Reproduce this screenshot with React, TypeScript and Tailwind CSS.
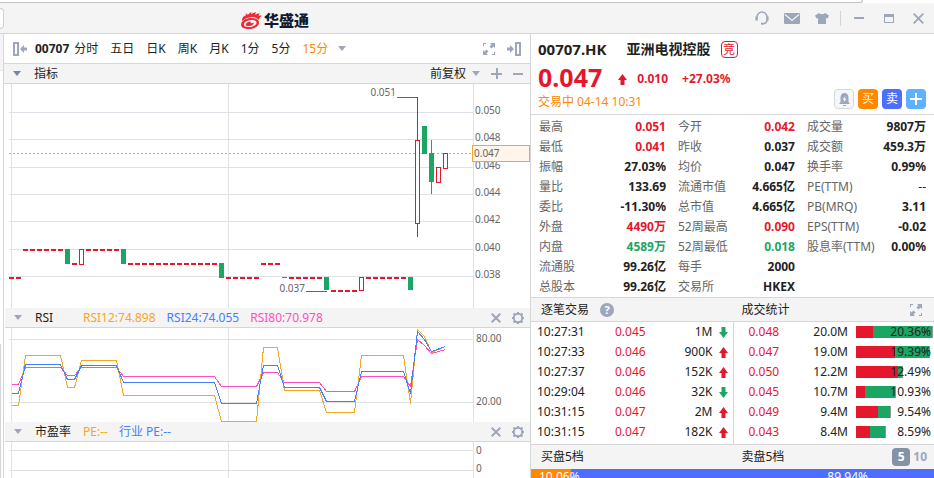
import type { ReactNode } from 'react';

type Tone = 'up' | 'down' | 'flat';

const toneClass: Record<Tone, string> = {
  up: 'font-bold text-[#e6172d]',
  down: 'font-bold text-[#1ba664]',
  flat: 'font-bold text-[#222222]',
};

const periods = ['分时', '五日', '日K', '周K', '月K', '1分', '5分', '15分'];

const quoteColumns: { label: string; value: string; tone?: Tone }[][] = [
  [
    { label: '最高', value: '0.051', tone: 'up' },
    { label: '最低', value: '0.041', tone: 'up' },
    { label: '振幅', value: '27.03%' },
    { label: '量比', value: '133.69' },
    { label: '委比', value: '-11.30%' },
    { label: '外盘', value: '4490万', tone: 'up' },
    { label: '内盘', value: '4589万', tone: 'down' },
    { label: '流通股', value: '99.26亿' },
    { label: '总股本', value: '99.26亿' },
  ],
  [
    { label: '今开', value: '0.042', tone: 'up' },
    { label: '昨收', value: '0.037' },
    { label: '均价', value: '0.047' },
    { label: '流通市值', value: '4.665亿' },
    { label: '总市值', value: '4.665亿' },
    { label: '52周最高', value: '0.090', tone: 'up' },
    { label: '52周最低', value: '0.018', tone: 'down' },
    { label: '每手', value: '2000' },
    { label: '交易所', value: 'HKEX' },
  ],
  [
    { label: '成交量', value: '9807万' },
    { label: '成交额', value: '459.3万' },
    { label: '换手率', value: '0.99%' },
    { label: 'PE(TTM)', value: '--' },
    { label: 'PB(MRQ)', value: '3.11' },
    { label: 'EPS(TTM)', value: '-0.02' },
    { label: '股息率(TTM)', value: '0.00%' },
  ],
];

const trades = [
  { time: '10:27:31', price: '0.045', volume: '1M', up: false },
  { time: '10:27:33', price: '0.046', volume: '900K', up: true },
  { time: '10:27:37', price: '0.046', volume: '152K', up: true },
  { time: '10:29:04', price: '0.046', volume: '32K', up: false },
  { time: '10:31:15', price: '0.047', volume: '2M', up: true },
  { time: '10:31:15', price: '0.047', volume: '182K', up: true },
];

const levels = [
  { price: '0.048', volume: '20.0M', buy: 17, sell: 60, share: '20.36%' },
  { price: '0.047', volume: '19.0M', buy: 39, sell: 35, share: '19.39%' },
  { price: '0.050', volume: '12.2M', buy: 42, sell: 5, share: '12.49%' },
  { price: '0.045', volume: '10.7M', buy: 9, sell: 31, share: '10.93%' },
  { price: '0.049', volume: '9.4M', buy: 22, sell: 13, share: '9.54%' },
  { price: '0.043', volume: '8.4M', buy: 14, sell: 16, share: '8.59%' },
];

// unchanged bars: [first slot, last slot, y]
const flatRuns = [
  [0, 1, 193], [2, 7, 165], [9, 9, 179], [11, 15, 165], [17, 29, 179], [31, 35, 193],
  [36, 38, 179], [40, 44, 193], [46, 49, 206], [51, 56, 193],
];

// slot, top and bottom of the body, then the wick
const candles: { slot: number; top: number; bottom: number; up?: boolean; high?: number; low?: number }[] = [
  { slot: 8, top: 165, bottom: 180 },
  { slot: 10, top: 165, bottom: 181, up: true },
  { slot: 16, top: 165, bottom: 180 },
  { slot: 30, top: 179, bottom: 194 },
  { slot: 39, top: 193, bottom: 194 },
  { slot: 45, top: 193, bottom: 206 },
  { slot: 50, top: 193, bottom: 207, up: true },
  { slot: 57, top: 193, bottom: 206 },
  { slot: 58, top: 56, bottom: 140, up: true, high: 13, low: 153 },
  { slot: 59, top: 42, bottom: 70 },
  { slot: 60, top: 69, bottom: 98, high: 56, low: 110 },
  { slot: 61, top: 83, bottom: 99, up: true },
  { slot: 62, top: 69, bottom: 85, up: true },
];

const priceTicks = [
  ['0.050', 28], ['0.048', 55], ['0.046', 83], ['0.044', 110], ['0.042', 137], ['0.040', 165], ['0.038', 192],
] as const;

const rsiX = [7, 14, 21, 56, 63, 70, 77, 112, 119, 210, 217, 252, 259, 273, 280, 315, 322, 350, 357, 399, 406, 413, 420, 427, 441];
const rsiLines = [
  { color: '#ff4fc0', y: [56, 56, 39, 39, 47, 47, 39, 39, 48, 48, 58, 58, 44, 44, 54, 54, 63, 63, 48, 48, 58, 11, 17, 25, 21] },
  { color: '#f5a623', y: [77, 77, 27, 27, 59, 59, 32, 32, 67, 67, 93, 93, 19, 19, 62, 62, 84, 84, 27, 27, 75, 1, 8, 24, 18] },
  { color: '#4280ff', y: [65, 65, 36, 36, 51, 51, 37, 37, 54, 54, 75, 75, 37, 37, 59, 59, 73, 73, 43, 43, 65, 3, 11, 23, 18] },
];

function slotX(slot: number) {
  return 5 + slot * 7;
}

function Caret() {
  return (
    <svg className="h-[5px] w-2 shrink-0" viewBox="0 0 8 5" fill="currentColor">
      <path d="M0 0h8L4 5z" />
    </svg>
  );
}

function Arrow({ up }: { up: boolean }) {
  return (
    <svg className={up ? 'h-[11px] w-[9px] text-[#e6172d]' : 'h-[11px] w-[9px] text-[#1ba664]'} viewBox="0 0 9 11" fill="currentColor">
      {up ? <path d="M4.5 0 9 6H6.500V11h-4V6H0z" /> : <path d="M4.5 11 0 5h2.500V0h4v5H9z" />}
    </svg>
  );
}

function ExpandIcon() {
  return (
    <svg className="h-3 w-3" viewBox="0 0 12 12" fill="currentColor">
      <path d="M0 0h3v1H1v2H0zM12 12H9v-1h2V9h1zM7 0h5v5l-1.500-1.500L8.500 5.500l-2-2 2-2zM5 12H0V7l1.500 1.500L3.500 6.500l2 2-2 2z" />
    </svg>
  );
}

function DockIcon({ flip }: { flip?: boolean }) {
  return (
    <svg className="h-[14px] w-[14px]" viewBox="0 0 14 14" fill="currentColor">
      {flip ? (
        <path fillRule="evenodd" d="M8 0h6v14H8zM10 2v10h2V2zM3 3l4 4-4 4V8.500H0v-3h3z" />
      ) : (
        <path fillRule="evenodd" d="M0 0h6v14H0zM2 2v10h2V2zM11 3 7 7l4 4V8.500h3v-3h-3z" />
      )}
    </svg>
  );
}

function CloseIcon() {
  return (
    <svg className="h-[10px] w-[10px]" viewBox="0 0 10 10" fill="none" stroke="currentColor" strokeWidth="2">
      <path d="m.7.7 8.600 8.600M9.300.7.7 9.300" />
    </svg>
  );
}

function GearIcon() {
  return (
    <svg className="h-3 w-3" viewBox="0 0 12 12" fill="none" stroke="currentColor">
      <circle cx="6" cy="6" r="4.200" strokeWidth="1.900" />
      <path
        strokeWidth="2"
        d="M6 0v1.800M6 10.200V12M0 6h1.800M10.200 6H12M1.500 1.500 3 3M9 9l1.500 1.500M10.500 1.500 9 3M3 9l-1.500 1.500"
      />
    </svg>
  );
}

function Logo() {
  return (
    <div className="flex items-center gap-0.5 pt-1">
      <svg className="h-[17px] w-[21px]" viewBox="0 0 21 17">
        <g fill="#ee2a35">
          <path d="M1 9C.5 6 2.500 4 5 3.200L4.600 1.200 7 2.800C8 1.600 9 .6 10.500 0c-.4 1-.3 1.600 0 2.200C12 1 13.500.4 15 .3c-.6 1-.7 1.700-.5 2.400 1.500-1 3-1.400 4.500-1.200-1 .8-1.300 1.600-1.200 2.500 1-.5 2-.6 3-.3-2 1.200-2.300 2.800-3.300 4.300C16 5.600 13 4.800 9.500 5.200 6 5.600 3 7 1 9z" />
          <path
            fillRule="evenodd"
            d="M0 12.500C.5 8.500 5 6 10.500 6c5 0 8 2 7.500 5-.6 3.500-4.500 6-10 6C3 17 0 15.500 0 12.500zM2.800 12.600c0 1.800 2 2.600 5 2.500 4-.1 7.400-2 7.700-4.200.2-1.900-2-2.900-5-2.800C6.500 8.200 3 10 2.800 12.600z"
          />
          <path d="M4.800 12.500c.3-1.700 2.800-3 5.700-3-1 .6-1.200 1.200-.8 1.600.8.300 1.800-.6 3.300-.4-.4 2-3 3.400-5.500 3.400-1.700 0-2.900-.6-2.700-1.600z" />
        </g>
      </svg>
      <span className="text-[15px] leading-5 font-black text-[#0f1b33]">华盛通</span>
    </div>
  );
}

function TitleBar() {
  return (
    <header className="flex h-[31px] shrink-0 items-center justify-between border-b border-[#d6d6d6] bg-[#f4f4f4] pr-[10px]">
      <div className="flex items-center">
        <div className="mr-[237px] h-[21px] w-1 rounded-r-sm border border-l-0 border-[#d0d0d0] bg-white" />
        <Logo />
      </div>
      <div className="flex items-center text-[#9da6bb]">
        <button aria-label="客服" className="mr-[15px]">
          <svg className="h-[14px] w-[14px]" viewBox="0 0 14 14" fill="none" stroke="currentColor">
            <path strokeWidth="1.500" d="M2 6.500V6a5 5 0 0 1 10 0v.5M12 9c0 2-1.500 3.500-4 3.700" />
            <path strokeWidth="2.400" d="M1.600 5.500v4M12.400 5.500v4" />
            <path strokeWidth="2" d="M6 12.700h2.500" />
          </svg>
        </button>
        <button aria-label="消息" className="mr-[15px]">
          <svg className="h-[11px] w-4" viewBox="0 0 16 11">
            <rect width="16" height="11" rx="1" fill="currentColor" />
            <path d="M1 1.500 8 7.500l7-6" fill="none" stroke="#f4f4f4" strokeWidth="1.200" />
          </svg>
        </button>
        <button aria-label="皮肤" className="mr-[11px]">
          <svg className="h-[11px] w-[14px]" viewBox="0 0 14 11" fill="currentColor">
            <path d="M4 0c1 1.600 5 1.600 6 0l4 2.500-1.500 3L11 5v6H3V5l-1.500.5L0 2.500z" />
          </svg>
        </button>
        <div className="mr-[13px] h-[15px] w-px bg-[#d0d3da]" />
        <button aria-label="最小化" className="mr-5">
          <svg className="h-[10px] w-[10px]" viewBox="0 0 10 10" fill="currentColor"><path d="M0 4h10v2H0z" /></svg>
        </button>
        <button aria-label="最大化" className="mr-[19px]">
          <svg className="h-[9px] w-[10px]" viewBox="0 0 10 9" fill="currentColor">
            <path fillRule="evenodd" d="M0 0h10v9H0zM1 3v5h8V3z" />
          </svg>
        </button>
        <button aria-label="关闭">
          <svg className="h-[11px] w-[11px]" viewBox="0 0 11 11" fill="none" stroke="currentColor" strokeWidth="1.800">
            <path d="m.7.7 9.600 9.600M10.300.7.7 10.300" />
          </svg>
        </button>
      </div>
    </header>
  );
}

function PeriodBar() {
  return (
    <nav className="flex h-[30px] shrink-0 items-center border-b border-[#d6d6d6] pr-[9px] pl-[9px]">
      <button aria-label="收起左栏" className="mr-2 text-[#9da6bb]"><DockIcon /></button>
      <span className="mr-[5px] font-bold">00707</span>
      <div className="flex gap-3">
        {periods.map((p) => (
          <button key={p} className={p === '15分' ? 'text-[#ff8800]' : ''}>{p}</button>
        ))}
      </div>
      <button aria-label="更多周期" className="ml-[10px] text-[#9da6bb]"><Caret /></button>
      <div className="ml-auto flex items-center gap-3 text-[#9da6bb]">
        <button aria-label="全屏"><ExpandIcon /></button>
        <button aria-label="收起右栏"><DockIcon flip /></button>
      </div>
    </nav>
  );
}

function IndicatorHeader({ title, children }: { title: string; children: ReactNode }) {
  return (
    <div className="ml-px flex h-5 shrink-0 items-center border-b border-[#d6d6d6] bg-[#f4f4f4] pr-[6px] pl-[9px]">
      <button aria-label="切换指标" className="mr-[13px] text-[#9da6bb]"><Caret /></button>
      <span className="w-12">{title}</span>
      <div className="flex gap-[11px]">{children}</div>
      <div className="ml-auto flex items-center gap-[11px] text-[#9da6bb]">
        <button aria-label="关闭指标"><CloseIcon /></button>
        <button aria-label="指标设置"><GearIcon /></button>
      </div>
    </div>
  );
}

function Grid({ rows, height }: { rows: readonly number[]; height: number }) {
  return (
    <g stroke="#e0e1e6" shapeRendering="crispEdges">
      {rows.map((y) => <line key={y} x1="5" x2="470" y1={y + 0.5} y2={y + 0.5} />)}
      {[7, 224, 469].map((x) => <line key={x} x1={x + 0.5} x2={x + 0.5} y1="0" y2={height} />)}
    </g>
  );
}

function PriceChart() {
  return (
    <div className="relative flex h-[224px] shrink-0">
      <svg className="h-full min-w-0 flex-1" viewBox="0 0 470 224" preserveAspectRatio="none" shapeRendering="crispEdges">
        <Grid rows={priceTicks.map((t) => t[1])} height={224} />
        <line x1="5" x2="469" y1="69.5" y2="69.5" stroke="#f5a623" strokeDasharray="2 2" />
        {flatRuns.map(([from, to, y]) =>
          Array.from({ length: to - from + 1 }, (_, i) => (
            <rect key={from + i} x={slotX(from + i)} y={y} width="5" height="2" fill="#e6172d" />
          ))
        )}
        {candles.map((c) => {
          const x = slotX(c.slot);
          const color = c.up ? '#e6172d' : '#1ba664';
          return (
            <g key={c.slot}>
              {c.high !== undefined && <rect x={x + 2} y={c.high} width="1" height={c.low! - c.high} fill={color} />}
              <rect x={x} y={c.top} width="5" height={c.bottom - c.top} fill={color} />
              {c.up && <rect x={x + 1} y={c.top + 1} width="3" height={c.bottom - c.top - 2} fill="#ffffff" />}
            </g>
          );
        })}
        <path d="M393 13.500h20M302 207.500h21" stroke="#666666" />
      </svg>
      <svg className="w-14 shrink-0" viewBox="0 0 56 224" fill="#666666" fontSize="10">
        {priceTicks.map(([label, y]) => <text key={label} x="1" y={y + 2}>{label}</text>)}
      </svg>
      {/* high and low of the session, left of their leader lines */}
      <span className="absolute top-0 right-[134px] text-[10px] leading-4 text-[#666666]">0.051</span>
      <span className="absolute right-[225px] bottom-3 text-[10px] leading-4 text-[#666666]">0.037</span>
      <span className="absolute top-[61px] right-0 h-[17px] w-[58px] border border-[#f5a623] bg-[#fff5eb] pl-px text-[10px] leading-[15px] text-[#666666]">
        0.047
      </span>
    </div>
  );
}

function RsiChart() {
  return (
    <div className="flex h-[94px] shrink-0">
      <svg className="h-full min-w-0 flex-1" viewBox="0 0 470 94" preserveAspectRatio="none">
        <Grid rows={[11, 74]} height={94} />
        {rsiLines.map((line) => (
          <polyline
            key={line.color}
            fill="none"
            stroke={line.color}
            shapeRendering="crispEdges"
            points={line.y.map((y, i) => `${rsiX[i] + 0.5},${y + 0.5}`).join(' ')}
          />
        ))}
      </svg>
      <svg className="w-14 shrink-0" viewBox="0 0 56 94" fill="#666666" fontSize="10">
        <text x="2" y="14">80.00</text>
        <text x="2" y="77">20.00</text>
      </svg>
    </div>
  );
}

function PeChart() {
  return (
    <div className="flex h-10 shrink-0">
      <svg className="h-full min-w-0 flex-1" viewBox="0 0 470 40" preserveAspectRatio="none">
        <Grid rows={[8, 28]} height={40} />
      </svg>
      <svg className="w-14 shrink-0" viewBox="0 0 56 40" fill="#666666" fontSize="10">
        <text x="2" y="12">0</text>
        <text x="2" y="30">0</text>
      </svg>
    </div>
  );
}

function ChartPanel() {
  return (
    <section className="flex min-w-0 flex-1 flex-col border-x border-[#d6d6d6]">
      <PeriodBar />
      <div className="flex h-5 shrink-0 items-center border-b border-[#d6d6d6] bg-[#f4f4f4] pr-[7px] pl-[9px]">
        <button aria-label="展开指标" className="mr-[13px] text-[#7486a8]"><Caret /></button>
        <span>指标</span>
        <label className="relative ml-auto mr-[11px] flex items-center text-[#9da6bb]">
          <select aria-label="复权" className="w-[50px] appearance-none bg-transparent text-[#222222]">
            <option>前复权</option>
          </select>
          <span className="pointer-events-none absolute right-0"><Caret /></span>
        </label>
        <div className="flex items-center gap-[11px] text-[#9da6bb]">
          <button aria-label="放大">
            <svg className="h-[11px] w-[11px]" viewBox="0 0 11 11" fill="currentColor"><path d="M5 0h2v5h4v2H7v4H5V7H0V5h5z" /></svg>
          </button>
          <button aria-label="缩小">
            <svg className="h-[11px] w-[10px]" viewBox="0 0 10 11" fill="currentColor"><path d="M0 5h10v2H0z" /></svg>
          </button>
        </div>
      </div>
      <PriceChart />
      <IndicatorHeader title="RSI">
        <span className="text-[#f5a623]">RSI12:74.898</span>
        <span className="text-[#4280ff]">RSI24:74.055</span>
        <span className="text-[#ff4fc0]">RSI80:70.978</span>
      </IndicatorHeader>
      <RsiChart />
      <IndicatorHeader title="市盈率">
        <span className="text-[#f5a623]">PE:--</span>
        <span className="text-[#4280ff]">行业 PE:--</span>
      </IndicatorHeader>
      <PeChart />
    </section>
  );
}

function QuoteHeader() {
  return (
    <div className="flex h-[81px] shrink-0 justify-between border-b border-[#d6d6d6] pr-2 pl-[7px]">
      <div>
        <h1 className="flex h-7 items-center pt-0.5 font-bold">
          <span className="mr-5 text-[15px]">00707.HK</span>
          <span className="mr-[10px] text-[14px]">亚洲电视控股</span>
          <span className="h-[17px] w-[17px] rounded-sm border border-[#e6172d] text-center text-[12px] leading-[15px] font-normal text-[#e6172d]">竞</span>
        </h1>
        <div className="flex h-[30px] items-center font-bold text-[#e6172d]">
          <span className="mr-4 text-[25px] leading-7">0.047</span>
          <div className="flex items-center pt-1">
            <Arrow up />
            <span className="ml-[10px]">0.010</span>
            <span className="ml-[14px]">+27.03%</span>
          </div>
        </div>
        <p className="text-[#ff8800]">交易中 04-14 10:31</p>
      </div>
      <div className="flex items-end gap-1 pb-[5px] text-[12px] leading-5 text-white">
        <button aria-label="提醒" className="flex h-5 w-5 items-center justify-center rounded-sm border border-[#d3d7df] bg-[#f5f7fa] text-[#9da6bb]">
          <svg className="h-[13px] w-[11px]" viewBox="0 0 11 13" fill="currentColor">
            <path d="M5.500 0C8 0 9.500 2 9.500 4.500V9L11 11H0l1.500-2V4.500C1.500 2 3 0 5.500 0zM4 12h3v1H4z" />
            <path d="M6.500 3 3.500 6.500h1.700L4.500 9.500l3-3.700H5.800z" fill="#f5f7fa" />
          </svg>
        </button>
        <button className="h-5 w-5 rounded-sm bg-[#ff8800]">买</button>
        <button className="h-5 w-5 rounded-sm bg-[#4e6eff]">卖</button>
        <button aria-label="加自选" className="flex h-5 w-5 items-center justify-center rounded-sm bg-[#5db1ff]">
          <svg className="h-3 w-3" viewBox="0 0 12 12" fill="currentColor"><path d="M5 0h2v5h5v2H7v5H5V7H0V5h5z" /></svg>
        </button>
      </div>
    </div>
  );
}

function QuoteStats() {
  return (
    <div className="grid shrink-0 grid-cols-[127fr_117fr_119fr] gap-3 border-b border-[#d6d6d6] px-2 pt-0.5">
      {quoteColumns.map((rows, i) => (
        <dl key={i}>
          {rows.map((r) => (
            <div key={r.label} className="flex justify-between">
              <dt className="text-[#666666]">{r.label}</dt>
              <dd className={r.value === '--' ? '' : toneClass[r.tone ?? 'flat']}>{r.value}</dd>
            </div>
          ))}
        </dl>
      ))}
    </div>
  );
}

function TradeTables() {
  return (
    <>
      <div className="grid h-6 shrink-0 grid-cols-2 items-center border-b border-[#d6d6d6] bg-[#f4f4f4]">
        <h2 className="flex items-center gap-[11px] pl-[10px]">
          逐笔交易
          <button aria-label="说明" className="h-[14px] w-[14px] rounded-full bg-[#9da6bb] text-[11px] leading-[14px] font-bold text-white">?</button>
        </h2>
        <div className="flex items-center justify-between pr-3 pl-[9px]">
          <h2>成交统计</h2>
          <button aria-label="展开统计" className="text-[#9da6bb]"><ExpandIcon /></button>
        </div>
      </div>
      <div className="grid shrink-0 grid-cols-2 border-b border-[#d6d6d6]">
        <table className="mb-0.5 w-full table-fixed">
          <tbody>
            {trades.map((t, i) => (
              <tr key={i}>
                <td className="w-[84px] p-0 pl-[6px]">{t.time}</td>
                <td className="p-0 text-[#e6172d]">{t.price}</td>
                <td className="p-0 text-right">{t.volume}</td>
                <td className="w-5 p-0 pl-[6px]"><Arrow up={t.up} /></td>
              </tr>
            ))}
          </tbody>
        </table>
        <div className="border-l border-[#d6d6d6]">
          <table className="w-full table-fixed">
            <tbody>
              {levels.map((l) => (
                <tr key={l.price}>
                  <td className="p-0 pl-[15px] text-[#e6172d]">{l.price}</td>
                  <td className="p-0 text-right">{l.volume}</td>
                  <td className="w-[86px] p-0 pl-2">
                    <div className="relative flex h-5 items-center">
                      <div className="h-3 bg-[#e6172d]" style={{ width: l.buy }} />
                      <div className="h-3 border-r border-[#8f9a94] bg-[#1ba664]" style={{ width: l.sell }} />
                      <span className="absolute right-[3px]">{l.share}</span>
                    </div>
                  </td>
                </tr>
              ))}
            </tbody>
          </table>
        </div>
      </div>
    </>
  );
}

function DepthBar() {
  return (
    <>
      <div className="grid h-6 shrink-0 grid-cols-2 items-center bg-[#f4f4f4]">
        <h2 className="pl-[10px]">买盘5档</h2>
        <div className="flex items-center justify-between pr-[7px] pl-[9px]">
          <h2>卖盘5档</h2>
          <div className="flex items-center gap-[3px] font-bold">
            <button className="h-[18px] w-[18px] rounded-sm bg-[#8492a6] leading-[18px] text-white">5</button>
            <button className="text-[#9da6bb]">10</button>
          </div>
        </div>
      </div>
      <div className="flex h-4 shrink-0 leading-4 text-white">
        <div className="w-[10%] bg-[#ff8800] pl-2 whitespace-nowrap"><span className="relative">10.06%</span></div>
        <div className="flex-1 bg-[#4e6eff] pr-[66px] text-right">89.94%</div>
      </div>
    </>
  );
}

export default function App() {
  return (
    <div className="flex h-screen flex-col overflow-hidden bg-white font-['Noto_Sans','Noto_Sans_CJK_SC',sans-serif] text-[12px] leading-5 text-[#222222]">
      <div className="h-[3px] shrink-0 bg-white">
        <div className="mr-[71px] h-full rounded-br-sm border-r border-b border-[#c4c4c4]" />
      </div>
      <TitleBar />
      <main className="flex min-h-0 flex-1">
        <div className="flex w-[3px] flex-col">
          <div className="h-[37px] border-b border-[#e4e4e4] bg-[#f4f4f4]" />
          <div className="mt-auto h-[134px] border-l border-[#d6d6d6]" />
        </div>
        <ChartPanel />
        <aside className="flex w-[403px] shrink-0 flex-col">
          <QuoteHeader />
          <QuoteStats />
          <TradeTables />
          <DepthBar />
        </aside>
      </main>
    </div>
  );
}
